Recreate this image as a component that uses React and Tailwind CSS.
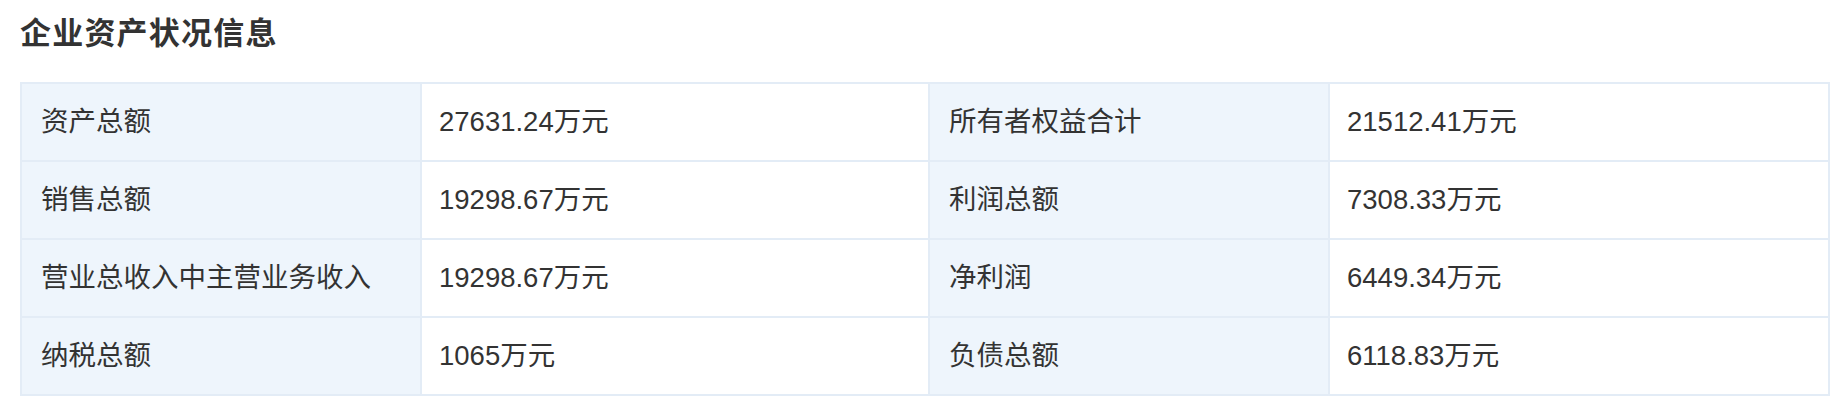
const rows = [
  ["资产总额", "27631.24万元", "所有者权益合计", "21512.41万元"],
  ["销售总额", "19298.67万元", "利润总额", "7308.33万元"],
  ["营业总收入中主营业务收入", "19298.67万元", "净利润", "6449.34万元"],
  ["纳税总额", "1065万元", "负债总额", "6118.83万元"],
]

const font = { fontFamily: '"Liberation Sans", "Noto Sans CJK SC", sans-serif' }

const App = () => {
  return (
    <div className="bg-white w-[1840px] h-[412px] pl-5 pt-[11px] text-[#333]" style={font}>
      <h2 className="text-[31px] leading-[46px] font-bold tracking-[1.2px] text-[#333]">
        企业资产状况信息
      </h2>
      <table className="mt-[25px] w-[1808px] table-fixed border-collapse">
        <colgroup>
          <col className="w-[400px]" />
          <col className="w-[508px]" />
          <col className="w-[400px]" />
          <col className="w-[500px]" />
        </colgroup>
        <tbody>
          {rows.map((r) => (
            <tr key={r[0]} className="h-[78px]">
              <td className="border-2 border-[#e3ecf6] bg-[#eef5fc] px-[19px] text-[27.5px]">{r[0]}</td>
              <td className="border-2 border-[#e3ecf6] px-[17px] text-[27.5px]">{r[1]}</td>
              <td className="border-2 border-[#e3ecf6] bg-[#eef5fc] px-[19px] text-[27.5px]">{r[2]}</td>
              <td className="border-2 border-[#e3ecf6] px-[17px] text-[27.5px]">{r[3]}</td>
            </tr>
          ))}
        </tbody>
      </table>
    </div>
  )
}

export default App
